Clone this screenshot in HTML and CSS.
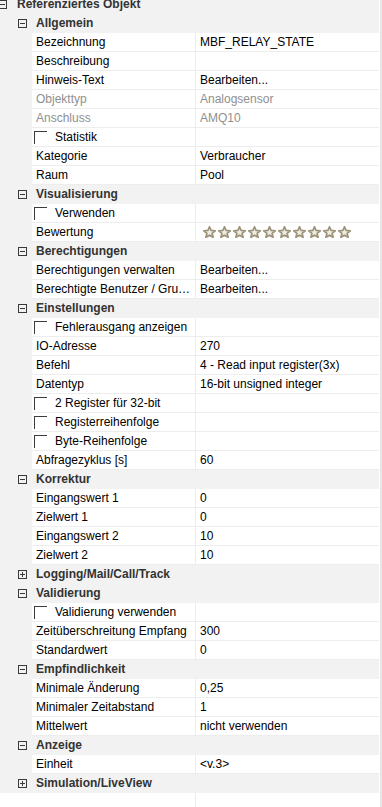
FILE: index.html
```html
<!DOCTYPE html>
<html>
<head>
    <link rel="stylesheet" href="styles.css">
</head>
<body>
    <svg width="0" height="0" class="defs">
        <symbol id="minus" viewBox="0 0 9 9">
            <rect x="0.5" y="0.5" width="8" height="8" fill="none" stroke="#3a3a3a"/>
            <path d="M2 4.5h5" stroke="#3a3a3a"/>
        </symbol>
        <symbol id="plus" viewBox="0 0 9 9">
            <rect x="0.5" y="0.5" width="8" height="8" fill="none" stroke="#3a3a3a"/>
            <path d="M2 4.5h5M4.5 2v5" stroke="#3a3a3a"/>
        </symbol>
        <symbol id="star" viewBox="0 0 24 22">
            <polygon points="12,1.5 15,8.2 22.6,8.8 16.8,13.6 18.6,20.8 12,16.9 5.4,20.8 7.2,13.6 1.4,8.8 9,8.2" fill="#efece3" stroke="#9c9378" stroke-width="3.2" stroke-linejoin="round"/>
        </symbol>
    </svg>

    <div class="panel">
        <div class="grid">
            <div class="cat top"><svg class="tog"><use href="#minus"/></svg>Referenziertes Objekt</div>

            <div class="cat"><svg class="tog"><use href="#minus"/></svg>Allgemein</div>
            <div class="row"><div class="name">Bezeichnung</div><div class="val">MBF_RELAY_STATE</div></div>
            <div class="row"><div class="name">Beschreibung</div><div class="val"></div></div>
            <div class="row"><div class="name">Hinweis-Text</div><div class="val">Bearbeiten...</div></div>
            <div class="row disabled"><div class="name">Objekttyp</div><div class="val">Analogsensor</div></div>
            <div class="row disabled"><div class="name">Anschluss</div><div class="val">AMQ10</div></div>
            <div class="row"><div class="name"><span class="check"></span>Statistik</div><div class="val"></div></div>
            <div class="row"><div class="name">Kategorie</div><div class="val">Verbraucher</div></div>
            <div class="row"><div class="name">Raum</div><div class="val">Pool</div></div>

            <div class="cat"><svg class="tog"><use href="#minus"/></svg>Visualisierung</div>
            <div class="row"><div class="name"><span class="check"></span>Verwenden</div><div class="val"></div></div>
            <div class="row">
                <div class="name">Bewertung</div>
                <div class="val stars">
                    <svg class="star"><use href="#star"/></svg>
                    <svg class="star"><use href="#star"/></svg>
                    <svg class="star"><use href="#star"/></svg>
                    <svg class="star"><use href="#star"/></svg>
                    <svg class="star"><use href="#star"/></svg>
                    <svg class="star"><use href="#star"/></svg>
                    <svg class="star"><use href="#star"/></svg>
                    <svg class="star"><use href="#star"/></svg>
                    <svg class="star"><use href="#star"/></svg>
                    <svg class="star"><use href="#star"/></svg>
                </div>
            </div>

            <div class="cat"><svg class="tog"><use href="#minus"/></svg>Berechtigungen</div>
            <div class="row"><div class="name">Berechtigungen verwalten</div><div class="val">Bearbeiten...</div></div>
            <div class="row"><div class="name">Berechtigte Benutzer / Gruppen</div><div class="val">Bearbeiten...</div></div>

            <div class="cat"><svg class="tog"><use href="#minus"/></svg>Einstellungen</div>
            <div class="row"><div class="name"><span class="check"></span>Fehlerausgang anzeigen</div><div class="val"></div></div>
            <div class="row"><div class="name">IO-Adresse</div><div class="val">270</div></div>
            <div class="row"><div class="name">Befehl</div><div class="val">4 - Read input register(3x)</div></div>
            <div class="row"><div class="name">Datentyp</div><div class="val">16-bit unsigned integer</div></div>
            <div class="row"><div class="name"><span class="check"></span>2 Register für 32-bit</div><div class="val"></div></div>
            <div class="row"><div class="name"><span class="check"></span>Registerreihenfolge</div><div class="val"></div></div>
            <div class="row"><div class="name"><span class="check"></span>Byte-Reihenfolge</div><div class="val"></div></div>
            <div class="row"><div class="name">Abfragezyklus [s]</div><div class="val">60</div></div>

            <div class="cat"><svg class="tog"><use href="#minus"/></svg>Korrektur</div>
            <div class="row"><div class="name">Eingangswert 1</div><div class="val">0</div></div>
            <div class="row"><div class="name">Zielwert 1</div><div class="val">0</div></div>
            <div class="row"><div class="name">Eingangswert 2</div><div class="val">10</div></div>
            <div class="row"><div class="name">Zielwert 2</div><div class="val">10</div></div>

            <div class="cat"><svg class="tog"><use href="#plus"/></svg>Logging/Mail/Call/Track</div>

            <div class="cat"><svg class="tog"><use href="#minus"/></svg>Validierung</div>
            <div class="row"><div class="name"><span class="check"></span>Validierung verwenden</div><div class="val"></div></div>
            <div class="row"><div class="name">Zeitüberschreitung Empfang</div><div class="val">300</div></div>
            <div class="row"><div class="name">Standardwert</div><div class="val">0</div></div>

            <div class="cat"><svg class="tog"><use href="#minus"/></svg>Empfindlichkeit</div>
            <div class="row"><div class="name">Minimale Änderung</div><div class="val">0,25</div></div>
            <div class="row"><div class="name">Minimaler Zeitabstand</div><div class="val">1</div></div>
            <div class="row"><div class="name">Mittelwert</div><div class="val">nicht verwenden</div></div>

            <div class="cat"><svg class="tog"><use href="#minus"/></svg>Anzeige</div>
            <div class="row"><div class="name">Einheit</div><div class="val">&lt;v.3&gt;</div></div>

            <div class="cat"><svg class="tog"><use href="#plus"/></svg>Simulation/LiveView</div>

            <div class="filler"><div class="filler-name"></div></div>
        </div>
        <div class="scroll"></div>
    </div>
</body>
</html>
```

FILE: styles.css
```css
body {
    margin: 0;
    background-color: #FFFFFF;
    font-family: "Liberation Sans", Arial, sans-serif;
    font-size: 12px;
    color: #000000;
    height: 807px;
    overflow: hidden;
}
.defs {
    position: absolute;
}
.panel {
    display: flex;
    height: 807px;
}
.grid {
    width: 379px;
    margin-top: -5px;
    margin-right: 1px;
    display: flex;
    flex-direction: column;
}
.cat {
    height: 19px;
    line-height: 19px;
    background-color: #F2F2F2;
    font-weight: bold;
    color: #333333;
    padding-left: 18px;
    display: flex;
    align-items: center;
    white-space: nowrap;
}
.cat.top {
    padding-left: 0;
    margin-left: -2px;
}
.tog {
    width: 9px;
    height: 9px;
    margin-right: 9px;
    flex-shrink: 0;
}
.cat.top .tog {
    margin-right: 10px;
}
.row {
    display: flex;
    height: 19px;
    padding-left: 32px;
    background-color: #F2F2F2;
}
.name,
.val {
    box-sizing: border-box;
    height: 19px;
    line-height: 18px;
    background-color: #FFFFFF;
    border-bottom: 1px solid #EDEDED;
    padding-left: 4px;
    white-space: nowrap;
    overflow: hidden;
}
.name {
    width: 164px;
    border-right: 1px solid #EDEDED;
    padding-right: 2px;
    text-overflow: ellipsis;
}
.val {
    flex: 1;
}
.disabled .name,
.disabled .val {
    color: #8F8F8F;
}
.check {
    display: inline-block;
    width: 13px;
    height: 13px;
    box-sizing: border-box;
    border-top: 1px solid #3C3C3C;
    border-left: 1px solid #3C3C3C;
    margin-left: -2px;
    margin-right: 8px;
    vertical-align: -3px;
}
.stars {
    display: flex;
    align-items: center;
    padding-left: 7px;
}
.star {
    width: 13px;
    height: 12px;
    margin-right: 2px;
    flex-shrink: 0;
}
.filler {
    flex: 1;
    display: flex;
    background-color: #FFFFFF;
}
.filler-name {
    width: 195px;
    border-right: 1px solid #EDEDED;
}
.scroll {
    width: 2px;
    background-color: #E6E6E6;
}
```
